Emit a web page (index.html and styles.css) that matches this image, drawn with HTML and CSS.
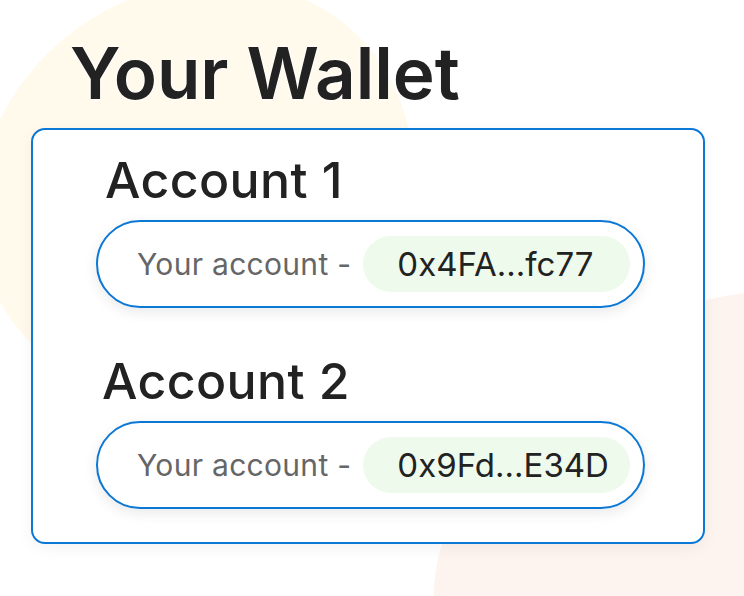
FILE: index.html
```html
<!DOCTYPE html>
<html>
<head>
<meta charset="utf-8">
<link rel="stylesheet" href="styles.css">
</head>
<body>
<div class="page">
  <div class="blob blob-yellow"></div>
  <div class="blob blob-peach"></div>
  <h1 class="title">Your Wallet</h1>
  <div class="card">
    <section class="account">
      <h2 class="account-name">Account 1</h2>
      <div class="pill">
        <span class="pill-label">Your account -</span>
        <span class="chip">0x4FA...fc77</span>
      </div>
    </section>
    <section class="account account-second">
      <h2 class="account-name">Account 2</h2>
      <div class="pill">
        <span class="pill-label">Your account -</span>
        <span class="chip">0x9Fd...E34D</span>
      </div>
    </section>
  </div>
</div>
</body>
</html>
```
FILE: styles.css
```css
html, body {
  margin: 0;
  padding: 0;
  background: #ffffff;
}
.page {
  position: relative;
  width: 744px;
  height: 596px;
  overflow: hidden;
  font-family: "Inter", "Liberation Sans", sans-serif;
  color: #222222;
  padding-top: 1px;
  box-sizing: border-box;
}
.blob {
  position: absolute;
  border-radius: 50%;
  z-index: 0;
}
.blob-yellow {
  left: -30px;
  top: -10px;
  width: 450px;
  height: 400px;
  background: #fffaeb;
  transform: rotate(-35deg);
}
.blob-peach {
  left: 395px;
  top: 345px;
  width: 520px;
  height: 300px;
  background: #fdf4ef;
  transform: rotate(-40deg);
}
.title {
  position: relative;
  z-index: 1;
  margin: 29px 0 0 70px;
  font-size: 71px;
  font-weight: 600;
  line-height: 86px;
  letter-spacing: 0;
  text-shadow: 0 0 4px #ffffff, 0 0 2px #ffffff;
}
.card {
  position: relative;
  z-index: 1;
  box-sizing: border-box;
  margin: 12px 0 0 31px;
  width: 674px;
  height: 416px;
  border: 2px solid #0b78d6;
  border-radius: 14px;
  background: #ffffff;
  box-shadow: 0 4px 16px rgba(0,0,0,0.05);
  padding: 20px 0 0 63px;
}
.account-second {
  margin-top: 43px;
}
.account-name {
  margin: 0 0 0 9px;
  font-size: 50px;
  font-weight: 500;
  line-height: 60px;
  letter-spacing: 0.4px;
}
.account-second .account-name {
  margin-left: 6px;
}
.pill {
  box-sizing: border-box;
  margin-top: 10px;
  width: 549px;
  height: 88px;
  border: 2px solid #0b78d6;
  border-radius: 44px;
  background: #ffffff;
  box-shadow: 0 4px 14px rgba(0,0,0,0.09);
  display: flex;
  align-items: center;
  padding: 0 13px 0 39px;
}
.pill-label {
  font-size: 30px;
  color: #666666;
  white-space: nowrap;
  letter-spacing: 0.3px;
}
.chip {
  margin-left: 12px;
  flex: 1;
  height: 56px;
  border-radius: 28px;
  background: #eefaec;
  display: flex;
  align-items: center;
  padding-left: 34px;
  font-size: 33px;
  color: #222222;
  white-space: nowrap;
}
```
